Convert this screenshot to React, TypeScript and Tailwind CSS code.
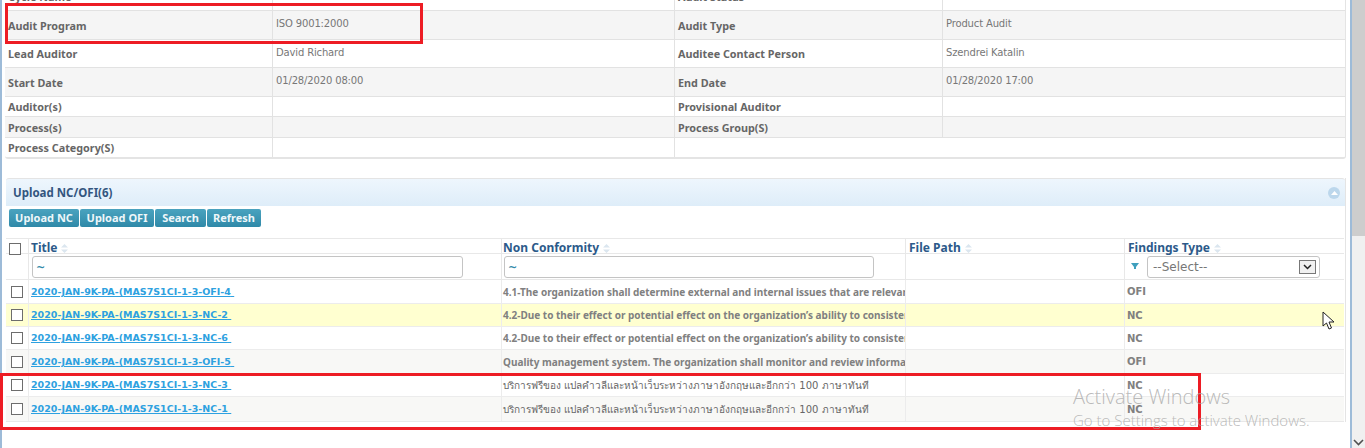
const font = "font-['DejaVu_Sans','Noto_Sans',sans-serif]";
const noto = "font-['Noto_Sans',sans-serif]";

const infoRows = [
  { h: "h-[28px]", shade: false, a: "Cycle Name", av: "", b: "Audit Status", bv: "" },
  { h: "h-[29px]", shade: true, a: "Audit Program", av: "ISO 9001:2000", b: "Audit Type", bv: "Product Audit" },
  { h: "h-[28px]", shade: false, a: "Lead Auditor", av: "David Richard", b: "Auditee Contact Person", bv: "Szendrei Katalin" },
  { h: "h-[29px]", shade: true, a: "Start Date", av: "01/28/2020 08:00", b: "End Date", bv: "01/28/2020 17:00" },
  { h: "h-[20px]", shade: false, a: "Auditor(s)", av: "", b: "Provisional Auditor", bv: "" },
  { h: "h-[21px]", shade: true, a: "Process(s)", av: "", b: "Process Group(S)", bv: "" },
];

const thai = "บริการฟรีของ แปลคำวลีและหน้าเว็บระหว่างภาษาอังกฤษและอีกกว่า 100 ภาษาทันที";
const q42 = "4.2-Due to their effect or potential effect on the organization’s ability to consistently provide";

const findings = [
  { id: "2020-JAN-9K-PA-(MAS7S1CI-1-3-OFI-4", text: "4.1-The organization shall determine external and internal issues that are relevant to its purpose", type: "OFI", bg: "bg-white", h: "h-[24px]" },
  { id: "2020-JAN-9K-PA-(MAS7S1CI-1-3-NC-2", text: q42, type: "NC", bg: "bg-[#ffffd0]", h: "h-[23px]" },
  { id: "2020-JAN-9K-PA-(MAS7S1CI-1-3-NC-6", text: q42, type: "NC", bg: "bg-white", h: "h-[23px]" },
  { id: "2020-JAN-9K-PA-(MAS7S1CI-1-3-OFI-5", text: "Quality management system. The organization shall monitor and review information about these issues", type: "OFI", bg: "bg-[#f8f8f6]", h: "h-[24px]" },
  { id: "2020-JAN-9K-PA-(MAS7S1CI-1-3-NC-3", text: thai, type: "NC", bg: "bg-white", h: "h-[23px]", normal: true },
  { id: "2020-JAN-9K-PA-(MAS7S1CI-1-3-NC-1", text: thai, type: "NC", bg: "bg-[#f8f8f6]", h: "h-[24px]", normal: true },
];

const gridCols = "grid grid-cols-[23px_473px_404px_219px_minmax(0,1fr)]";

function Sort() {
  return (
    <svg width="7" height="9" viewBox="0 0 7 9" className="ml-[4px] inline-block" aria-hidden>
      <path d="M3.5 0L7 3.5H0Z M3.5 9L0 5.5H7Z" fill="#dbe6ef" />
    </svg>
  );
}

function Box({ className = "" }: { className?: string }) {
  return <span className={`block size-[12px] border border-[#6d6d6d] bg-white ${className}`} />;
}

function InfoTable() {
  const label = `flex items-center border-r border-[#e2e2e2] pl-[3px] pt-[2px] text-[10.8px] font-bold text-[#666666] ${noto}`;
  const value = "pl-[3px] pt-[5px] text-[10px] tracking-[-0.15px] text-[#777777]";
  return (
    <div className="-mt-[17px] ml-[3px] w-[1341px] overflow-hidden rounded-b-[3px] border-r border-b-2 border-[#e4e4e4]">
      {infoRows.map((r) => (
        <div
          key={r.a}
          className={`grid grid-cols-[268px_402px_268px_minmax(0,1fr)] border-b border-[#e2e2e2] ${r.h} ${r.shade ? "bg-[#f5f5f5]" : "bg-white"}`}
        >
          <div className={label}>{r.a}</div>
          <div className={`border-r border-[#e2e2e2] ${value}`}>{r.av}</div>
          <div className={label}>{r.b}</div>
          <div className={value}>{r.bv}</div>
        </div>
      ))}
      <div className="grid h-[19px] grid-cols-[268px_402px_268px_minmax(0,1fr)] bg-white">
        <div className={label}>Process Category(S)</div>
        <div className="border-r border-[#e2e2e2]" />
      </div>
    </div>
  );
}

function Toolbar() {
  const buttons = [
    { label: "Upload NC", w: "w-[70px]" },
    { label: "Upload OFI", w: "w-[74px]" },
    { label: "Search", w: "w-[51px]" },
    { label: "Refresh", w: "w-[54px]" },
  ];
  return (
    <div className="flex gap-[1px] pl-[3px] pt-[3px]">
      {buttons.map((b) => (
        <button
          key={b.label}
          className={`flex h-[18px] items-center justify-center rounded-[2px] bg-gradient-to-b from-[#4aa3bf] to-[#2f89a8] text-[11px] font-bold text-[#eef7fa] ${noto} ${b.w}`}
        >
          {b.label}
        </button>
      ))}
    </div>
  );
}

function FindingsGrid() {
  return (
    <div className="mt-[11px] w-[1338px] border-b border-[#e8e8e8]">
      <div className={`${gridCols} h-[16px] border-y border-[#e8e8e8] text-[12px] font-bold text-[#2c5a8a] ${noto}`}>
        <div className="flex items-center border-r border-[#e8e8e8] pl-[3px]"><Box /></div>
        <div className="flex items-center border-r border-[#e8e8e8] pb-[1px] pl-[2px]">Title<Sort /></div>
        <div className="flex items-center border-r border-[#e8e8e8] pb-[1px] pl-[1px]">Non Conformity<Sort /></div>
        <div className="flex items-center border-r border-[#e8e8e8] pb-[1px] pl-[3px]">File Path<Sort /></div>
        <div className="flex items-center pb-[1px] pl-[3px]">Findings Type<Sort /></div>
      </div>
      <div className={`${gridCols} h-[26px] border-b border-[#e8e8e8] bg-white`}>
        <div className="border-r border-[#e8e8e8]" />
        <div className="flex items-center border-r border-[#e8e8e8] pl-[3px]">
          <div className="flex h-[22px] w-[431px] items-center rounded-[3px] border border-[#c4c4c4] pl-[3px] pt-[3px] text-[11px] font-bold text-[#2f89a8]">~</div>
        </div>
        <div className="flex items-center border-r border-[#e8e8e8] pl-[2px]">
          <div className="flex h-[22px] w-[370px] items-center rounded-[3px] border border-[#c4c4c4] pl-[3px] pt-[3px] text-[11px] font-bold text-[#2f89a8]">~</div>
        </div>
        <div className="border-r border-[#e8e8e8]" />
        <div className="flex items-center pl-[6px]">
          <svg width="8" height="7" viewBox="0 0 8 7" aria-hidden>
            <path d="M0 0H8L5 4V6H3V4Z" fill="#3f9fbd" />
          </svg>
          <div className="ml-[8px] flex h-[22px] w-[173px] items-center justify-between rounded-[3px] border border-[#c4c4c4] pl-[5px] pr-[3px] text-[12px] text-[#777777]">
            --Select--
            <span className="flex h-[14px] w-[17px] items-center justify-center border border-[#777777] bg-[#f0f0f0]">
              <svg width="9" height="6" viewBox="0 0 9 6" fill="none" aria-hidden>
                <path d="M1 1L4.5 4.5L8 1" stroke="#222222" strokeWidth="1.5" />
              </svg>
            </span>
          </div>
        </div>
      </div>
      {findings.map((f) => (
        <div key={f.id} className={`${gridCols} ${f.h} border-b border-[#ececec] last:border-b-0 ${f.bg}`}>
          <div className="flex items-center border-r border-[#ececec] pl-[5px]"><Box /></div>
          <div className="flex items-center border-r border-[#ececec] pl-[2px] pt-[1px] text-[9.5px] font-bold text-[#2ea1e0] underline">{f.id}&nbsp;</div>
          <div className={`flex items-center overflow-hidden whitespace-nowrap border-r border-[#ececec] pl-[1px] pt-[1px] ${f.normal ? "text-[10px] font-normal text-[#666666]" : `text-[10px] font-bold text-[#808080] ${noto}`}`}>{f.text}</div>
          <div className="border-r border-[#ececec]" />
          <div className="flex items-center pl-[2px] text-[10px] font-bold text-[#808080]">{f.type}</div>
        </div>
      ))}
    </div>
  );
}

export default function App() {
  return (
    <div className={`relative flex h-[448px] w-[1365px] overflow-hidden bg-white ${font}`}>
      <main className="w-[1352px] overflow-hidden border-x-2 border-x-[#9dbbd8] bg-white">
        <InfoTable />
        <section className="ml-[4px] mt-[19px] w-[1340px] border-r border-[#e4e4e4]">
          <header className={`flex h-[28px] items-center justify-between rounded-t-[3px] border-t border-[#e4e4e4] bg-gradient-to-b from-[#eef6fd] to-[#deedf9] pl-[7px] pr-[5px] text-[11.5px] font-bold text-[#33567f] ${noto}`}>
            Upload NC/OFI(6)
            <span className="flex size-[12px] items-center justify-center rounded-full bg-[#bcd7ec]">
              <svg width="7" height="4" viewBox="0 0 7 4" aria-hidden>
                <path d="M3.5 0L7 4H0Z" fill="#ffffff" />
              </svg>
            </span>
          </header>
          <Toolbar />
          <FindingsGrid />
        </section>
      </main>

      <aside className="relative flex-1 bg-[#f0f0f0]">
        <div className="h-[236px] bg-[#cdcdcd]" />
        <svg width="11" height="7" viewBox="0 0 11 7" fill="none" className="absolute bottom-[2px] left-[1px]" aria-hidden>
          <path d="M1 1L5.5 5.5L10 1" stroke="#505050" strokeWidth="1.6" />
        </svg>
      </aside>

      {/* annotations drawn over the screenshot */}
      <div className="pointer-events-none absolute left-[5px] top-[3px] h-[41px] w-[418px] border-[3px] border-[#ed1c24]" />
      <div className="pointer-events-none absolute left-0 top-[373px] h-[57px] w-[1201px] border-[3px] border-[#ed1c24]" />

      <svg width="14" height="20" viewBox="0 0 14 20" className="absolute left-[1322px] top-[311px]" aria-hidden>
        <path d="M1 1V15L4.5 12L7 18L9.5 17L7 11H12Z" fill="#ffffff" stroke="#222222" strokeWidth="1" />
      </svg>

      <div className="pointer-events-none absolute left-[1073px] top-[385px] font-['Open_Sans',sans-serif] font-light text-[#a8a8a8]/80">
        <div className="text-[20px] leading-[24px]">Activate Windows</div>
        <div className="text-[15px] leading-[22px]">Go to Settings to activate Windows.</div>
      </div>
    </div>
  );
}
